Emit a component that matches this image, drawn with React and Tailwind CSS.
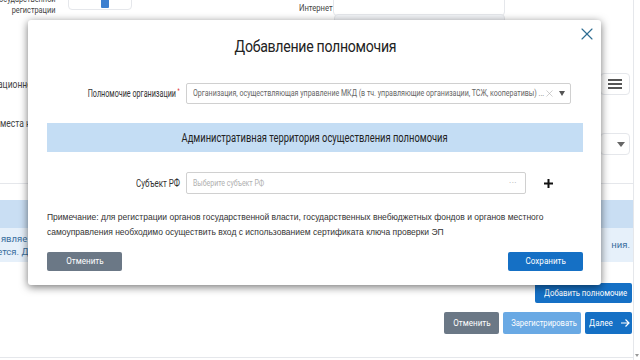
import { X } from "lucide-react";

function PageBackground() {
  return (
    <div className="flex h-full">
      <div className="flex-1 flex flex-col -mt-[6px] text-[#333]">
        {/* row: дата регистрации / интернет */}
        <div className="flex h-[26px] items-start">
          <div className="w-[56px] flex flex-col items-end text-[9px] leading-[11px] text-[#444]">
            <span className="inline-block scale-x-[0.82] origin-right whitespace-nowrap">государственной</span>
            <span className="inline-block scale-x-[0.82] origin-right whitespace-nowrap">регистрации</span>
          </div>
          <div className="ml-[12px] mt-[2px] w-[64px] h-[14px] border border-gray-200 rounded-sm flex items-center justify-end pr-[22px]">
            <div className="w-[8px] h-[10px] bg-[#3d7fcf] rounded-[1px]"></div>
          </div>
          <div className="ml-[165px] mt-[8px] w-[36px] flex justify-end text-[9px] text-[#444]">
            <span className="inline-block scale-x-[0.85] origin-right whitespace-nowrap">Интернет</span>
          </div>
          <div className="ml-[0px] mt-[1px] w-[172px] h-[21px] border border-gray-200 rounded-sm"></div>
        </div>
        <div className="flex h-[44px] items-start">
          <div className="ml-[334px] -mt-[6px] w-[171px] h-[21px] bg-[#f2f4f7] border border-gray-200 rounded-sm"></div>
        </div>
        {/* row: организационно-правовая форма */}
        <div className="flex h-[40px] items-center">
          <div className="-ml-[2px] text-[10px] text-[#444] inline-block scale-x-[0.85] origin-left">ационно-</div>
          <div className="ml-auto mr-[3px] w-[30px] h-[22px] border border-gray-200 rounded-sm flex flex-col items-center justify-center gap-[2px]">
            <div className="w-[14px] h-[2px] bg-[#555]"></div>
            <div className="w-[14px] h-[2px] bg-[#555]"></div>
            <div className="w-[14px] h-[2px] bg-[#555]"></div>
          </div>
        </div>
        {/* row: адрес места нахождения */}
        <div className="flex h-[50px] items-start">
          <div className="mt-[14px] text-[10px] text-[#444] leading-[12px] inline-block scale-x-[0.85] origin-left whitespace-nowrap">места на</div>
          <div className="ml-auto mr-[3px] mt-[29px] w-[30px] h-[22px] border border-gray-200 rounded-sm flex items-center justify-end pr-[4px]">
            <div className="w-0 h-0 border-l-[4px] border-r-[4px] border-t-[5px] border-l-transparent border-r-transparent border-t-[#666]"></div>
          </div>
        </div>
        <div className="h-[30px] border-b border-gray-200"></div>
        <div className="h-[16px]"></div>
        <div className="h-[28px] bg-[#c9def3]"></div>
        <div className="h-[34px] bg-[#e6f0fa] flex text-[9.5px] text-[#3a6f9e]">
          <div className="flex flex-col justify-center leading-[13px]">
            <span className="-ml-[14px] whitespace-nowrap">ми являе</span>
            <span className="-ml-[8px] whitespace-nowrap">ается. Д</span>
          </div>
          <div className="ml-auto mr-[3px] flex items-center">ния.</div>
        </div>
        <div className="h-[21px]"></div>
        <div className="flex justify-end pr-[1px]">
          <button className="h-[20px] w-[97px] bg-[#1570c5] text-white text-[9.5px] rounded-[2px] whitespace-nowrap">
            <span className="inline-block scale-x-[0.82]">Добавить полномочие</span>
          </button>
        </div>
        <div className="flex justify-end gap-[4px] mt-[9px] pr-[1px]">
          <button className="h-[22px] w-[55px] bg-[#6b7886] text-white text-[9.5px] rounded-[2px]">
            <span className="inline-block scale-x-[0.85]">Отменить</span>
          </button>
          <button className="h-[22px] w-[78px] bg-[#69a9e4] text-white text-[9.5px] rounded-[2px] whitespace-nowrap">
            <span className="inline-block scale-x-[0.8]">Зарегистрировать</span>
          </button>
          <button className="h-[22px] w-[47px] bg-[#1570c5] text-white text-[9.5px] rounded-[2px] flex items-center justify-center gap-[5px]">
            <span className="inline-block scale-x-[0.85]">Далее</span>
            <svg width="10" height="10" viewBox="0 0 10 10" fill="none" stroke="white" strokeWidth="1.2">
              <path d="M1 5h8M5.5 1.5L9 5l-3.5 3.5" />
            </svg>
          </button>
        </div>
        <div className="flex-1 border-b border-gray-200 mb-[2px]"></div>
      </div>
      <div className="w-[7px] border-l border-gray-200 flex flex-col justify-end items-center pb-[3px]">
        <div className="w-0 h-0 border-l-[2px] border-r-[2px] border-t-[3px] border-l-transparent border-r-transparent border-t-[#999]"></div>
      </div>
    </div>
  );
}

function AddAuthorityModal() {
  return (
    <div className="absolute left-[28px] top-[20px] w-[573px] h-[265px] bg-white rounded-[3px] shadow-[0_2px_8px_rgba(0,0,0,0.55)] pl-[19px] pr-[18px]">
      <button className="absolute top-[4px] right-[4px] text-[#2e6d92]">
        <X size={20} strokeWidth={1.4} />
      </button>
      <div className="h-[54px] flex items-center justify-center">
        <h2 className="text-[17px] tracking-[-0.02em] text-[#222] font-normal inline-block scale-x-[0.83] whitespace-nowrap">
          Добавление полномочия
        </h2>
      </div>

      <div className="mt-[9px] flex items-center h-[21px]">
        <div className="w-[133px] flex justify-end text-[10px] text-[#333] whitespace-nowrap">
          <span className="inline-block scale-x-[0.72] origin-right">
            Полномочие организации<span className="text-[#d33] align-top text-[7px] ml-[2px]">*</span>
          </span>
        </div>
        <div className="ml-[6px] w-[385px] h-[21px] border border-[#d0d0d0] rounded-[2px] flex items-center pl-[6px] pr-[5px] text-[8.5px] text-[#666] overflow-hidden">
          <span className="flex-1 min-w-0 whitespace-nowrap">
            <span className="inline-block scale-x-[0.83] origin-left">
              Организация, осуществляющая управление МКД (в тч. управляющие организации, ТСЖ, кооперативы) ...
            </span>
          </span>
          <X size={11} strokeWidth={1.2} className="text-[#aaa] ml-[2px] shrink-0" />
          <div className="ml-[4px] shrink-0 w-0 h-0 border-l-[3.5px] border-r-[3.5px] border-t-[5px] border-l-transparent border-r-transparent border-t-[#555]"></div>
        </div>
      </div>

      <div className="mt-[19px] h-[29px] bg-[#c4ddf4] flex items-center justify-center text-[12px] text-[#222] whitespace-nowrap">
        <span className="inline-block scale-x-[0.78]">Административная территория осуществления полномочия</span>
      </div>

      <div className="mt-[20px] flex items-center h-[22px]">
        <div className="w-[133px] flex justify-end text-[10px] text-[#333] whitespace-nowrap">
          <span className="inline-block scale-x-[0.8] origin-right">Субъект РФ</span>
        </div>
        <div className="ml-[6px] w-[340px] h-[22px] border border-[#d0d0d0] rounded-[2px] flex items-center pl-[6px] pr-[8px] text-[8.5px] text-[#b0b0b0] whitespace-nowrap">
          <span className="flex-1">
            <span className="inline-block scale-x-[0.82] origin-left">Выберите субъект РФ</span>
          </span>
          <span className="text-[#aaa] tracking-[0.05em]">···</span>
        </div>
        <svg className="ml-[18px]" width="9" height="9" viewBox="0 0 9 9">
          <path d="M4.5 0v9M0 4.5h9" stroke="#111" strokeWidth="2" />
        </svg>
      </div>

      <p className="mt-[16px] text-[8.5px] leading-[15px] text-[#333] font-['Liberation_Sans',sans-serif] whitespace-nowrap">
        Примечание: для регистрации органов государственной власти, государственных внебюджетных фондов и органов местного
        <br />
        самоуправления необходимо осуществить вход с использованием сертификата ключа проверки ЭП
      </p>

      <div className="mt-[12px] flex justify-between">
        <button className="h-[19px] w-[75px] bg-[#6b7886] text-white text-[9.5px] rounded-[2px]">
          <span className="inline-block scale-x-[0.85]">Отменить</span>
        </button>
        <button className="h-[19px] w-[75px] bg-[#1570c5] text-white text-[9.5px] rounded-[2px]">
          <span className="inline-block scale-x-[0.85]">Сохранить</span>
        </button>
      </div>
    </div>
  );
}

export default function App() {
  return (
    <div className="relative w-[640px] h-[360px] overflow-hidden bg-white font-['Roboto',sans-serif]">
      <PageBackground />
      <AddAuthorityModal />
    </div>
  );
}
